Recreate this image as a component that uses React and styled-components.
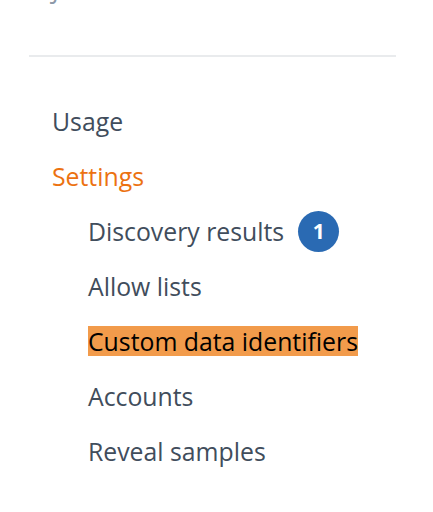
import React from 'react';
import styled, { createGlobalStyle } from 'styled-components';

const GlobalStyle = createGlobalStyle`
  html, body {
    margin: 0;
    padding: 0;
    background: #ffffff;
  }
  body {
    font-family: "Open Sans", "Liberation Sans", sans-serif;
    overflow: hidden;
  }
`;

const subItems = [
  { label: 'Discovery results', badge: 1 },
  { label: 'Allow lists' },
  { label: 'Custom data identifiers', highlighted: true },
  { label: 'Accounts' },
  { label: 'Reveal samples' },
];

const App = () => {
  return (
    <Nav>
      <GlobalStyle />
      <TopItem>Jobs</TopItem>
      <Divider />
      <List>
        <NavItem $level={1}>
          <Label>Usage</Label>
        </NavItem>
        <NavItem $level={1}>
          <Label $active>Settings</Label>
        </NavItem>
        {subItems.map((item) => (
          <NavItem key={item.label} $level={2}>
            <Label $highlighted={item.highlighted}>{item.label}</Label>
            {item.badge && <Badge>{item.badge}</Badge>}
          </NavItem>
        ))}
      </List>
    </Nav>
  );
};

const Nav = styled.nav`
  width: 433px;
  height: 512px;
  overflow: hidden;
  color: #414d5c;
  font-size: 24.8px;
`;

const TopItem = styled.div`
  margin-top: -26px;
  padding-left: 52px;
  line-height: 30px;
  color: #8d99a8;
`;

const Divider = styled.hr`
  margin: 51px 37px 0 29px;
  border: none;
  border-top: 2px solid #e9ebed;
  height: 0;
`;

const List = styled.ul`
  list-style: none;
  margin: 49px 0 0;
  padding: 0;
  display: flex;
  flex-direction: column;
  gap: 25px;
`;

const NavItem = styled.li`
  display: flex;
  align-items: center;
  gap: 14px;
  height: 30px;
  line-height: 30px;
  padding-left: ${({ $level }) => ($level === 2 ? '88px' : '52px')};
`;

const Label = styled.span`
  display: inline-block;
  line-height: 30px;
  color: ${({ $active, $highlighted }) =>
    $active ? '#ec7211' : $highlighted ? '#000000' : '#414d5c'};
  background: ${({ $highlighted }) => ($highlighted ? '#f29b4b' : 'transparent')};
  white-space: nowrap;
`;

const Badge = styled.span`
  display: inline-flex;
  align-items: center;
  justify-content: center;
  flex-shrink: 0;
  width: 41px;
  height: 41px;
  border-radius: 50%;
  background: #2a6ab3;
  color: #ffffff;
  font-size: 21px;
  font-weight: 700;
  line-height: 1;
`;

export default App;
